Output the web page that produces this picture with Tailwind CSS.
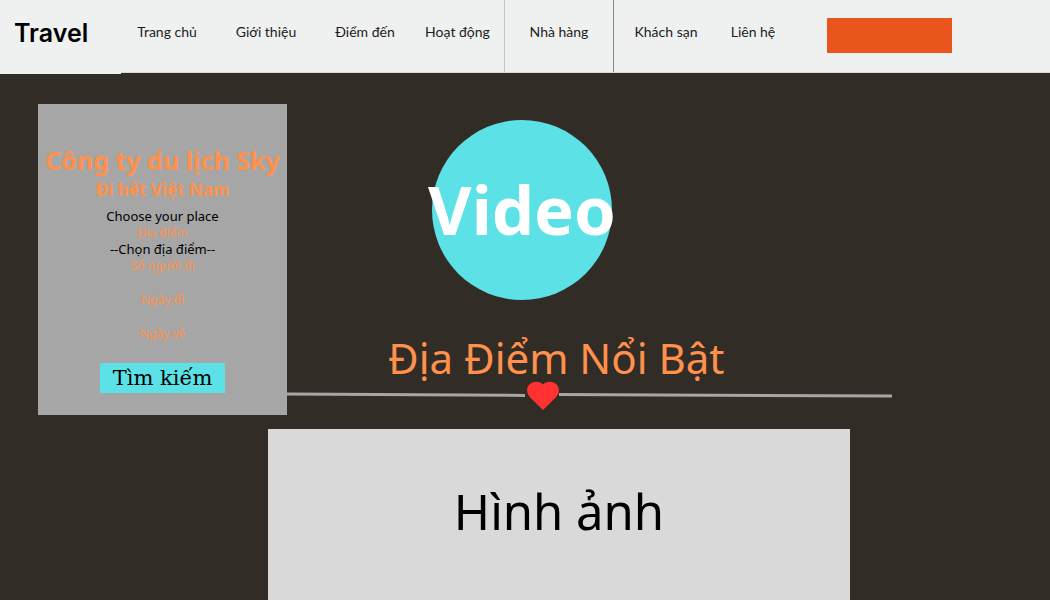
<!DOCTYPE html>
<html lang="vi">
<head>
<meta charset="utf-8">
<meta name="viewport" content="width=device-width, initial-scale=1">
<title>Travel</title>
<script src="https://cdn.jsdelivr.net/npm/@tailwindcss/browser@4"></script>
</head>
<body class="min-h-screen overflow-x-hidden bg-[#322c26] font-['Noto_Sans',sans-serif] text-black">
<header class="flex h-[73px] items-start bg-[#eff1f0]">
  <a href="#" class="h-[74px] w-[121px] shrink-0 bg-[#eff1f0] pt-[17px] pl-[14px] font-[Inter,sans-serif] text-[25px] leading-8 font-semibold">Travel</a>
  <nav class="flex h-full shrink-0 border-b border-[#d9dbda] text-center font-[Lato,sans-serif] text-[14px] leading-4 text-[#1c1c1c]">
    <a href="#" class="w-[92px] pt-6">Trang chủ</a>
    <a href="#" class="w-[106px] pt-6">Giới thiệu</a>
    <a href="#" class="w-[92px] pt-6">Điểm đến</a>
    <a href="#" class="w-[94px] border-r border-[#c4c6c5] pt-6">Hoạt động</a>
    <a href="#" class="w-[109px] border-r border-[#858786] pt-6">Nhà hàng</a>
    <a href="#" class="w-[104px] pt-6">Khách sạn</a>
    <a href="#" class="w-[70px] pt-6">Liên hệ</a>
  </nav>
  <div class="h-full flex-1 border-b border-[#d9dbda] pt-[18px] pl-[39px]">
    <button type="button" aria-label="Đăng nhập" class="block h-[35px] w-[125px] bg-[#e9551d]"></button>
  </div>
</header>
<main>
  <div class="flex items-start pt-[31px] pl-[38px]">
    <form class="flex w-[249px] shrink-0 flex-col items-center bg-[#a6a6a6] pt-10 pb-[22px] text-center text-[12px] leading-4 text-[#ff914d]">
      <h1 class="text-[25px] leading-8 font-bold whitespace-nowrap">Công ty du lịch Sky</h1>
      <h2 class="text-[17px] leading-7 font-bold">Đi hết Việt Nam</h2>
      <p class="mt-1 text-[13px] text-black">Choose your place</p>
      <label for="place" class="leading-[17px]">Địa điểm</label>
      <select id="place" class="h-4 appearance-none text-[13px] leading-4 text-black [text-align-last:center]"><option>--Chọn địa điểm--</option></select>
      <label for="people" class="leading-[17px]">Số người đi</label>
      <input id="people" type="text" class="h-[17px] w-40 text-center outline-none">
      <label for="start" class="leading-[17px]">Ngày đi</label>
      <input id="start" type="text" class="h-[17px] w-40 text-center outline-none">
      <label for="end" class="leading-[17px]">Ngày về</label>
      <input id="end" type="text" class="h-[21px] w-40 text-center outline-none">
      <button type="submit" class="h-[30px] w-[125px] bg-[#5ce1e6] font-['DejaVu_Serif',serif] text-[21px] leading-[30px] text-black">Tìm kiếm</button>
    </form>
    <section class="min-w-0 max-w-[605px] flex-1 pt-4">
      <div class="ml-[145px] flex size-[180px] items-center justify-center rounded-full bg-[#5ce1e6]">
        <span class="pb-[2px] text-[67px] leading-[90px] font-bold text-white">Video</span>
      </div>
      <h2 class="mt-[31px] ml-[101px] text-[42px] leading-[54px] whitespace-nowrap text-[#ff914d]">Địa Điểm Nổi Bật</h2>
      <div class="-mt-1 flex h-[29px] items-start">
        <svg class="h-[29px] w-[238px] shrink-0" viewBox="0 0 238 29"><path d="M0 13L238 14.400" stroke="#a6a6a6" stroke-width="3"/></svg>
        <svg class="ml-[2px] h-[29px] w-8 shrink-0" viewBox="0 0 32 29"><path d="M16 29L2.800 16A10 10 0 0 1 0 9.500C0 4.500 4 .7 9 .7C12 .7 14.500 1.500 16 3.500C17.500 1.500 20 .7 23 .7C28 .7 32 4.500 32 9.500A10 10 0 0 1 29.200 16Z" fill="#ff3131"/></svg>
        <svg class="h-[29px] min-w-0 flex-1" viewBox="0 0 333 29" preserveAspectRatio="none"><path d="M0 13.500L333 15" stroke="#a6a6a6" stroke-width="3"/></svg>
      </div>
    </section>
  </div>
  <section class="mt-[14px] ml-[268px] flex min-h-[171px] max-w-[582px] justify-center bg-[#d9d9d9] pt-[49px]">
    <h2 class="text-[49px] leading-[66px]">Hình ảnh</h2>
  </section>
</main>
</body>
</html>
